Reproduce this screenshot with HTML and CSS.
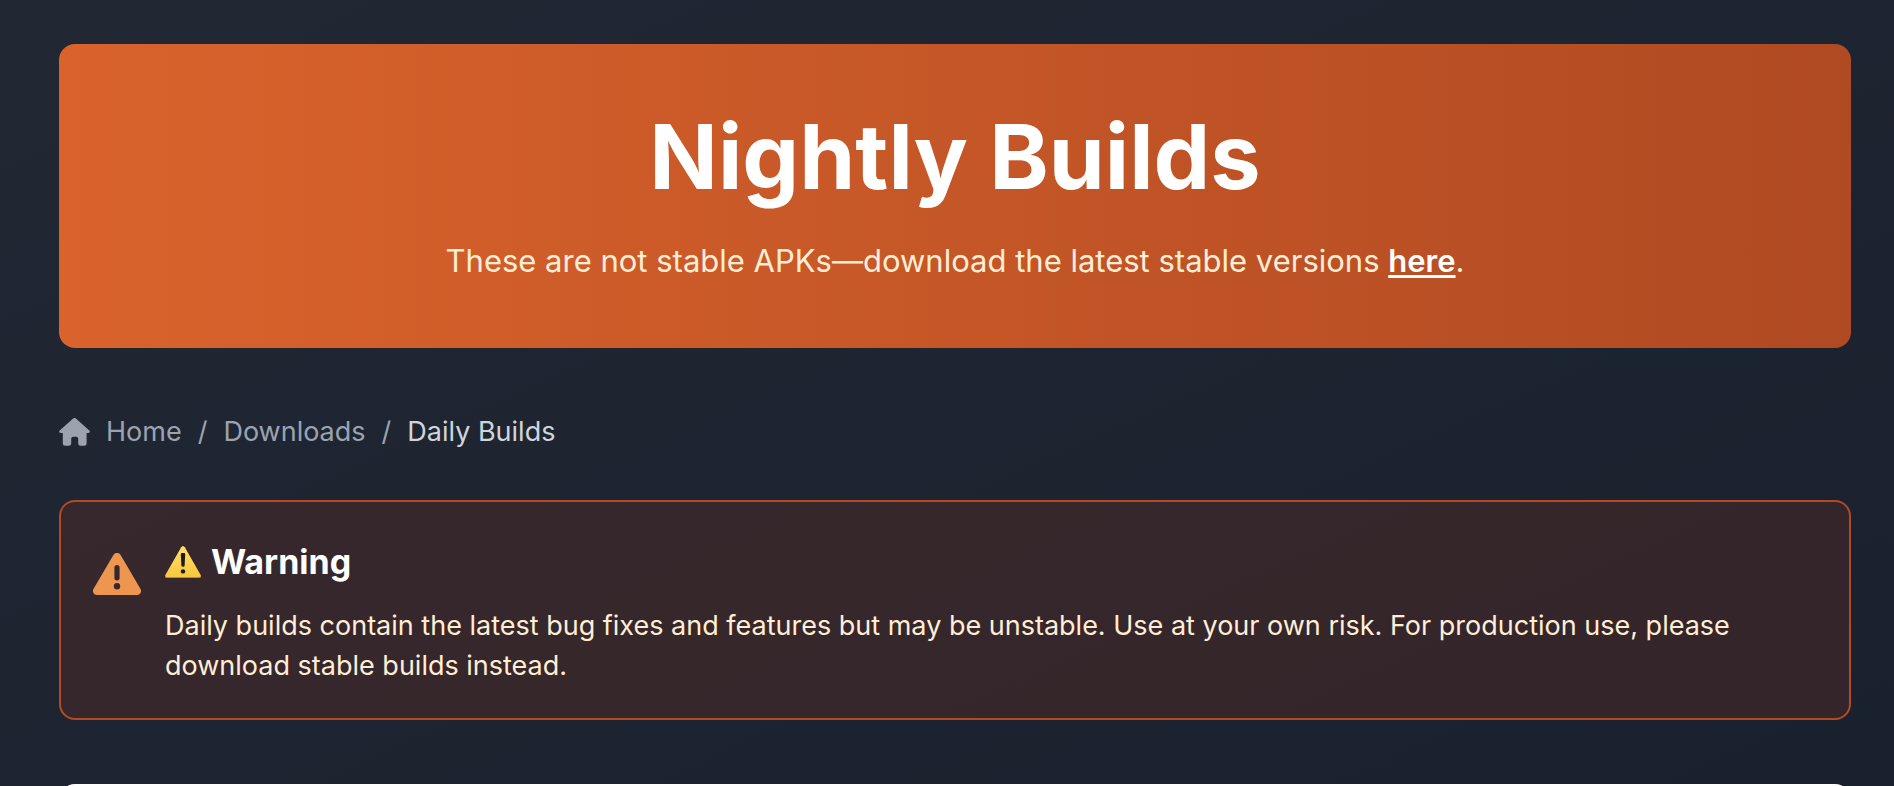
FILE: index.html
```html
<!DOCTYPE html>
<html lang="en">
<head>
    <meta charset="UTF-8">
    <meta name="viewport" content="width=device-width, initial-scale=1.0">
    <title>Nightly Builds</title>
    <link rel="stylesheet" href="styles.css">
</head>
<body>
    <main class="page">
        <header class="banner">
            <h1>Nightly Builds</h1>
            <p>These are not stable APKs—download the latest stable versions <a href="#">here</a>.</p>
        </header>

        <nav class="breadcrumb" aria-label="Breadcrumb">
            <svg class="home-icon" viewBox="0 0 31 28" aria-hidden="true">
                <path d="M14.1 0.6a2 2 0 0 1 2.8 0L30.3 12.5q1.6 2.1-1 2.6H27.6V25.4a2.4 2.4 0 0 1-2.4 2.4H21.6a2.4 2.4 0 0 1-2.4-2.4V20.8a2 2 0 0 0-2-2H14.2a2 2 0 0 0-2 2V25.4a2.4 2.4 0 0 1-2.4 2.4H6.2a2.4 2.4 0 0 1-2.4-2.4V15.1H1.7Q-0.9 14.6 0.7 12.5Z"/>
            </svg>
            <a href="#">Home</a>
            <span>/</span>
            <a href="#">Downloads</a>
            <span>/</span>
            <span class="current">Daily Builds</span>
        </nav>

        <section class="warning">
            <svg class="warning-icon" viewBox="0 0 48 42" aria-hidden="true">
                <path fill-rule="evenodd" d="M20.4 2a4.2 4.2 0 0 1 7.2 0L47.4 35.8a4 4 0 0 1-3.4 6.2H4a4 4 0 0 1-3.4-6.2ZM24 12a2.6 2.6 0 0 0-2.6 2.6V24.8a2.6 2.6 0 0 0 5.2 0V14.6A2.6 2.6 0 0 0 24 12ZM24 30a3.2 3.2 0 1 0 0 6.4a3.2 3.2 0 1 0 0-6.4Z"/>
            </svg>
            <div class="warning-body">
                <h2>
                    <svg class="caution-icon" viewBox="0 0 36 32" aria-hidden="true">
                        <defs>
                            <linearGradient id="caution" x1="0" y1="0" x2="0" y2="1">
                                <stop offset="0" stop-color="#ffe06a"/>
                                <stop offset="1" stop-color="#f8c73d"/>
                            </linearGradient>
                        </defs>
                        <path fill="#b88b35" d="M16.3 1.2q1.7-2.1 3.4 0L35.8 29.8q.6 2.2-1.6 2.2H1.8Q-.4 32 .2 29.8Z"/>
                        <path fill="url(#caution)" d="M16.3 1.2q1.7-2.1 3.4 0L35.6 29q.6 2-1.6 2H2Q-.2 31 .4 29Z"/>
                        <path fill="#1e1b13" d="M15.8 8.4q0-1.4 1.2-1.4h2q1.2 0 1.2 1.4l-.6 11q-.2 1.4-1.6 1.4t-1.6-1.4Z"/>
                        <circle fill="#1e1b13" cx="18" cy="25.4" r="2.2"/>
                    </svg>
                    Warning
                </h2>
                <p>Daily builds contain the latest bug fixes and features but may be unstable. Use at your own risk. For production use, please download stable builds instead.</p>
            </div>
        </section>

        <section class="card"></section>
    </main>
</body>
</html>
```
FILE: styles.css
```css
* {
    box-sizing: border-box;
}

body {
    margin: 0;
    min-height: 100vh;
    font-family: Inter, "Liberation Sans", sans-serif;
    font-size: 27px;
    line-height: 40px;
    color: #ffffff;
    background: linear-gradient(to bottom right, #212834, #1a212e);
}

h1, h2, p {
    margin: 0;
}

.page {
    padding: 44px 43px 0 59px;
}

.banner {
    padding: 65px 64px 63px;
    border-radius: 16px;
    text-align: center;
    background: linear-gradient(to right, #da632c, #b04a22);
}

.banner h1 {
    margin-bottom: 32px;
    font-size: 90px;
    line-height: 96px;
    font-weight: 700;
}

.banner p {
    font-size: 31px;
    line-height: 48px;
    color: #ffedd5;
}

.banner a {
    color: #ffffff;
    font-weight: 600;
    text-decoration-thickness: 3px;
    text-underline-offset: 3px;
}

.breadcrumb {
    display: flex;
    align-items: center;
    gap: 16px;
    margin: 64px 0 48px;
    color: #9ca3af;
}

.breadcrumb a {
    color: inherit;
    text-decoration: none;
}

.breadcrumb .current {
    color: #d1d5db;
}

.home-icon {
    width: 31px;
    height: 28px;
    fill: #9ca3af;
}

.warning {
    display: flex;
    align-items: flex-start;
    gap: 24px;
    padding: 32px;
    border: 2px solid #b34a22;
    border-radius: 16px;
    background: rgba(114, 48, 34, 0.3);
}

.warning-icon {
    flex: none;
    width: 48px;
    height: 42px;
    margin-top: 19px;
    fill: #ed964f;
}

.warning-body h2 {
    display: flex;
    align-items: center;
    gap: 10px;
    margin-bottom: 16px;
    font-size: 34px;
    line-height: 56px;
    font-weight: 700;
}

.caution-icon {
    width: 36px;
    height: 32px;
}

.warning-body p {
    color: #ffedd5;
}

.card {
    min-height: 64px;
    margin-top: 64px;
    border-radius: 16px;
    background: #ffffff;
}
```
